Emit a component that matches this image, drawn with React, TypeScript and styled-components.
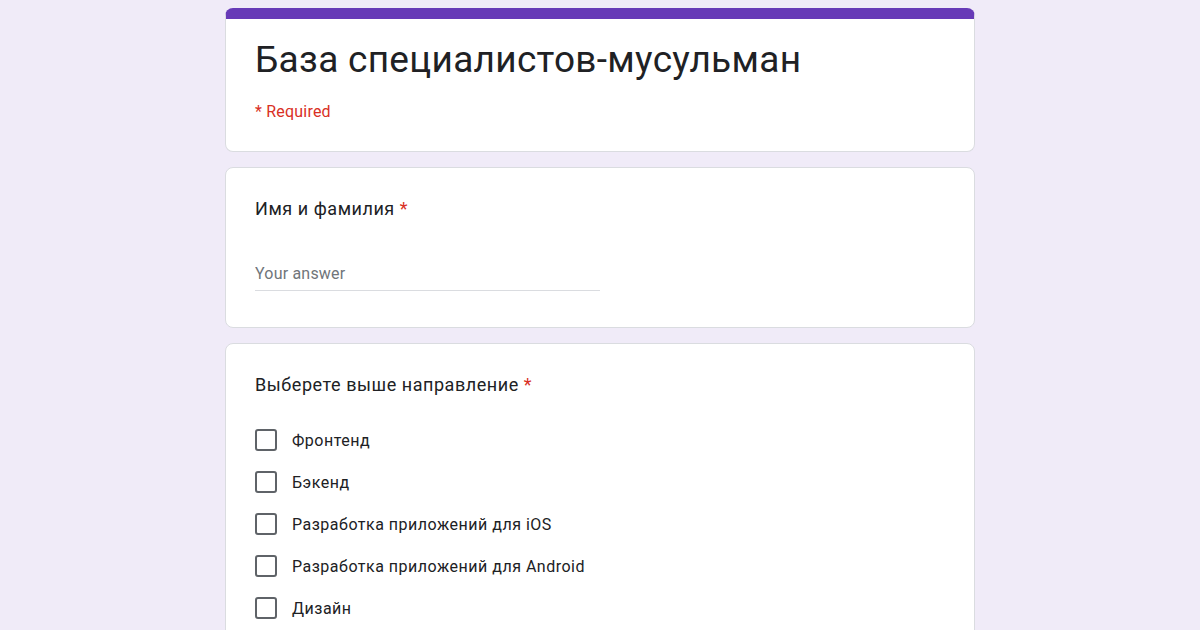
import styled, { createGlobalStyle } from 'styled-components';

const GlobalStyle = createGlobalStyle`
    body {
        margin: 0;
        background: #f0ebf8;
        font-family: Roboto, 'Noto Sans', sans-serif;
    }
`;

const options = [
    'Фронтенд',
    'Бэкенд',
    'Разработка приложений для iOS',
    'Разработка приложений для Android',
    'Дизайн',
];

const App = () => {
    return (
        <>
            <GlobalStyle />
            <Page>
                <Column>
                    <HeaderCard>
                        <Title>База специалистов-мусульман</Title>
                        <RequiredNote>* Required</RequiredNote>
                    </HeaderCard>
                    <Card>
                        <Question>
                            Имя и фамилия <Star>*</Star>
                        </Question>
                        <AnswerInput placeholder="Your answer" />
                    </Card>
                    <Card>
                        <Question>
                            Выберете выше направление <Star>*</Star>
                        </Question>
                        <OptionList>
                            {options.map((o) => (
                                <Option key={o}>
                                    <Box />
                                    <span>{o}</span>
                                </Option>
                            ))}
                        </OptionList>
                    </Card>
                </Column>
            </Page>
        </>
    );
};
export default App;

const Page = styled.div`
    width: 1200px;
    height: 630px;
    overflow: hidden;
    display: flex;
    justify-content: center;
    padding-top: 8px;
    box-sizing: border-box;
`;
const Column = styled.div`
    width: 750px;
    display: flex;
    flex-direction: column;
    gap: 15px;
`;
const Card = styled.div`
    background: #fff;
    border: 1px solid #dadce0;
    border-radius: 8px;
    padding: 24px 29px 36px;
    box-sizing: border-box;
`;
const HeaderCard = styled(Card)`
    border-top: 11px solid #673ab7;
    border-top-color: #673ab7;
    padding: 17px 29px 29px;
    min-height: 144px;
`;
const Title = styled.div`
    font-size: 37px;
    line-height: 48px;
    color: #202124;
    letter-spacing: 0.3px;
`;
const RequiredNote = styled.div`
    margin-top: 18px;
    font-size: 16px;
    color: #d93025;
    letter-spacing: 0.2px;
`;
const Question = styled.div`
    font-size: 18px;
    line-height: 24px;
    color: #202124;
    padding-top: 5px;
    letter-spacing: 0.55px;
`;
const Star = styled.span`
    color: #d93025;
`;
const AnswerInput = styled.input`
    display: block;
    margin-top: 43px;
    width: 345px;
    border: none;
    border-bottom: 1px solid #dadce0;
    padding: 0 0 7px;
    font-family: Roboto, sans-serif;
    font-size: 16px;
    letter-spacing: 0.2px;
    outline: none;
    &::placeholder {
        color: #70757a;
    }
`;
const OptionList = styled.div`
    margin-top: 32px;
    display: flex;
    flex-direction: column;
    gap: 20px;
`;
const Option = styled.label`
    display: flex;
    align-items: center;
    gap: 15px;
    font-size: 16px;
    color: #202124;
    letter-spacing: 0.5px;
`;
const Box = styled.span`
    width: 18px;
    height: 18px;
    border: 2px solid #5f6368;
    border-radius: 3px;
    flex-shrink: 0;
`;
